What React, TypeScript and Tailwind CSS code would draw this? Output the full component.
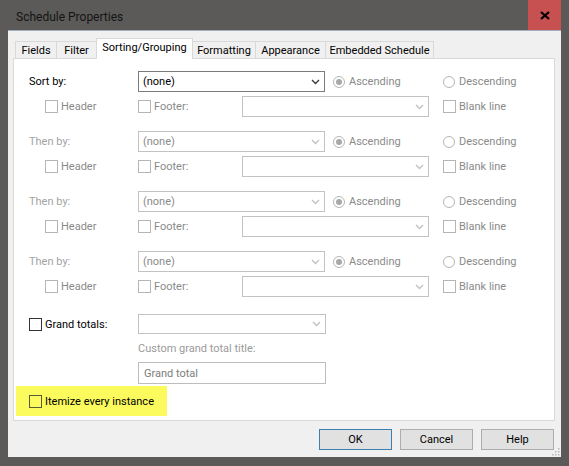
import React from "react";

const FONT = "font-['Roboto',sans-serif]";

function Chevron({ disabled }: { disabled?: boolean }) {
  return (
    <svg width="9" height="6" viewBox="0 0 9 6" className="shrink-0">
      <path
        d="M1 1 L4.5 4.5 L8 1"
        fill="none"
        stroke={disabled ? "#c2c2c2" : "#3a3a3a"}
        strokeWidth="1.4"
      />
    </svg>
  );
}

function Select({
  value,
  width,
  height = "h-[21px]",
  disabled,
}: {
  value?: string;
  width: string;
  height?: string;
  disabled?: boolean;
}) {
  return (
    <div
      className={`${width} ${height} flex items-center justify-between bg-white border pl-[4px] pr-[4px] ${
        disabled ? "border-[#c3c3c3] text-[#8a8a8a]" : "border-[#7a7a7a] text-black"
      }`}
    >
      <span className="pt-[2px]">{value}</span>
      <Chevron disabled={disabled} />
    </div>
  );
}

function Check({ label, dark }: { label: string; dark?: boolean }) {
  return (
    <div className="flex items-center gap-[3px]">
      <div
        className={`w-[13px] h-[13px] border bg-white ${dark ? "border-[#333]" : "border-[#b5b5b5]"}`}
      />
      <span className={`pt-[2px] ${dark ? "text-black" : "text-[#8a8a8a]"}`}>{label}</span>
    </div>
  );
}

function Radio({ label, checked }: { label: string; checked?: boolean }) {
  return (
    <div className="flex items-center gap-[4px]">
      <div className="w-[12px] h-[12px] rounded-full border border-[#b5b5b5] bg-white flex items-center justify-center">
        {checked && <div className="w-[6px] h-[6px] rounded-full bg-[#a8a8a8]" />}
      </div>
      <span className="pt-[2px] text-[#8a8a8a]">{label}</span>
    </div>
  );
}

function SortGroup({ label, first }: { label: string; first?: boolean }) {
  return (
    <div className="flex flex-col gap-[4px]">
      <div className="flex items-center h-[21px]">
        <span className={`w-[109px] pt-[2px] ${first ? "text-black" : "text-[#a3a3a3]"}`}>{label}</span>
        <Select value="(none)" width="w-[187px]" disabled={!first} />
        <div className="ml-[8px] w-[110px]">
          <Radio label="Ascending" checked />
        </div>
        <Radio label="Descending" />
      </div>
      <div className="flex items-center h-[21px] pl-[16px]">
        <div className="w-[93px]">
          <Check label="Header" />
        </div>
        <div className="w-[104px]">
          <Check label="Footer:" />
        </div>
        <Select width="w-[187px]" disabled />
        <div className="ml-[14px]">
          <Check label="Blank line" />
        </div>
      </div>
    </div>
  );
}

const tabs = [
  { name: "Fields", w: "w-[42px]" },
  { name: "Filter", w: "w-[41px]" },
  { name: "Sorting/Grouping", w: "w-[97px]", active: true },
  { name: "Formatting", w: "w-[64px]" },
  { name: "Appearance", w: "w-[71px]" },
  { name: "Embedded Schedule", w: "w-[109px]" },
];

export default function App() {
  return (
    <div className={`${FONT} text-[11px] w-[569px] h-[466px] bg-[#5b5a58] flex flex-col`}>
      {/* Title bar */}
      <div className="h-[30px] flex items-start">
        <span className="pl-[16px] pt-[8px] text-[12px] text-[#141414]">Schedule Properties</span>
        <div className="ml-auto mr-[8px] w-[33px] h-[30px] bg-[#c75050] flex items-center justify-center">
          <svg width="10" height="9" viewBox="0 0 10 9">
            <path d="M1 1 L9 8 M9 1 L1 8" stroke="#000" strokeWidth="2.2" />
          </svg>
        </div>
      </div>

      {/* Client */}
      <div className="relative mx-[8px] h-[427px] bg-[#f0f0f0] border-t border-[#a3aebb] flex flex-col">
        {/* Tabs */}
        <div className="mt-[7px] h-[20px] flex items-end pl-[8px]">
          {tabs.map((t) =>
            t.active ? (
              <div
                key={t.name}
                className={`${t.w} h-[21px] -mb-px -ml-px relative z-10 bg-white border border-b-0 border-[#d9d9d9] flex items-center justify-center pb-[1px] text-black whitespace-nowrap`}
              >
                {t.name}
              </div>
            ) : (
              <div
                key={t.name}
                className={`${t.w} h-[17px] -ml-px bg-[#f0f0f0] border border-b-0 border-[#d9d9d9] flex items-center justify-center pt-[2px] text-black whitespace-nowrap`}
              >
                {t.name}
              </div>
            )
          )}
        </div>

        {/* Panel */}
        <div className="ml-[5px] mr-[6px] bg-white border border-[#d9d9d9] pl-[15px] pt-[12px] pb-[4px] flex flex-col">
          <div className="flex flex-col gap-[14px]">
            <SortGroup label="Sort by:" first />
            <SortGroup label="Then by:" />
            <SortGroup label="Then by:" />
            <SortGroup label="Then by:" />
          </div>

          <div className="mt-[17px] flex items-center h-[20px]">
            <div className="w-[109px]">
              <Check label="Grand totals:" dark />
            </div>
            <Select width="w-[188px]" height="h-[20px]" disabled />
          </div>

          <div className="mt-[6px] h-[16px] pl-[109px] pt-[2px] flex items-center text-[#9a9a9a]">
            Custom grand total title:
          </div>

          <div className="mt-[6px] ml-[109px] w-[188px] h-[22px] border border-[#bdbdbd] bg-white flex items-center pl-[5px] pt-[2px] text-[#7d7d7d]">
            Grand total
          </div>

          <div className="mt-[2px] -ml-[13px] w-[151px] h-[30px] bg-[#fbfb5e] flex items-center pl-[13px]">
            <div className="flex items-center gap-[3px]">
              <div className="w-[13px] h-[13px] border border-[#5a5a3a]" />
              <span className="pt-[2px] text-black">Itemize every instance</span>
            </div>
          </div>
        </div>

        {/* Buttons */}
        <div className="mt-[8px] flex justify-end gap-[8px] pr-[7px]">
          <div className="w-[73px] h-[21px] bg-[#e1e1e1] border border-[#3c7fb1] flex items-center justify-center pt-[1px] text-black">
            OK
          </div>
          <div className="w-[73px] h-[21px] bg-[#e1e1e1] border border-[#adadad] flex items-center justify-center pt-[1px] text-black">
            Cancel
          </div>
          <div className="w-[73px] h-[21px] bg-[#e1e1e1] border border-[#adadad] flex items-center justify-center pt-[1px] text-black">
            Help
          </div>
        </div>

        {/* Size grip */}
        <svg width="8" height="8" viewBox="0 0 8 8" className="absolute right-[1px] bottom-[1px]">
          <rect x="6" y="0" width="1.5" height="1.5" fill="#b8b8b8" />
          <rect x="3" y="3" width="1.5" height="1.5" fill="#b8b8b8" />
          <rect x="6" y="3" width="1.5" height="1.5" fill="#b8b8b8" />
          <rect x="0" y="6" width="1.5" height="1.5" fill="#b8b8b8" />
          <rect x="3" y="6" width="1.5" height="1.5" fill="#b8b8b8" />
          <rect x="6" y="6" width="1.5" height="1.5" fill="#b8b8b8" />
        </svg>
      </div>
    </div>
  );
}
